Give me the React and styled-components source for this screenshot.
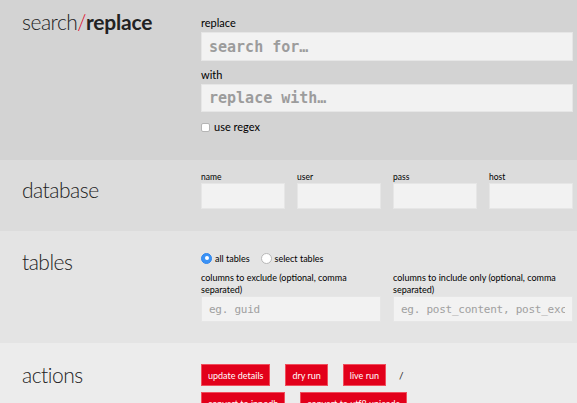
import React from 'react';
import styled, { createGlobalStyle } from 'styled-components';

const GlobalStyle = createGlobalStyle`
	html, body {
		margin: 0;
		padding: 0;
		overflow: hidden;
		background: #ececec;
	}
	body {
		font-family: Lato, "Liberation Sans", sans-serif;
		color: #111;
	}
`;

const Section = styled.section`
	display: grid;
	grid-template-columns: 201px 372px;
	height: ${(p) => p.$height}px;
	box-sizing: border-box;
	padding-right: 4px;
	background: ${(p) => p.$bg};
`;

const Heading = styled.h1`
	margin: ${(p) => p.$top}px 0 0 22px;
	font-family: Lato, "Liberation Sans", sans-serif;
	font-weight: 300;
	font-size: 21px;
	line-height: 24px;
	letter-spacing: -0.5px;
	color: #222;

	> strong {
		font-weight: 700;
		letter-spacing: -0.2px;
	}
	> em {
		font-style: normal;
		color: #e0001b;
	}
`;

const Content = styled.div`
	padding-top: ${(p) => p.$top}px;
	display: flex;
	flex-direction: column;
`;

const Field = styled.div`
	display: flex;
	flex-direction: column;
	margin-bottom: ${(p) => p.$gap || 0}px;
`;

const Label = styled.label`
	font-size: ${(p) => p.$size || 11}px;
	line-height: ${(p) => p.$line || 14}px;
	color: #000;
	margin-bottom: ${(p) => p.$mb || 0}px;
`;

const TextInput = styled.input`
	box-sizing: border-box;
	width: 100%;
	height: ${(p) => p.$h || 26}px;
	margin: 0;
	padding: 0 7px;
	border: 1px solid #e6e6e6;
	background: #f2f2f2;
	outline: none;
	font-family: "DejaVu Sans Mono", "Liberation Mono", monospace;
	font-size: ${(p) => p.$fs || 11}px;
	letter-spacing: ${(p) => (p.$fs ? 0 : -0.25)}px;
	line-height: ${(p) => (p.$h || 26) - 2}px;
	font-weight: ${(p) => (p.$bold ? 700 : 400)};
	color: #333;

	&::placeholder {
		color: ${(p) => (p.$bold ? '#9c9c9c' : '#a0a0a0')};
	}
`;

const CheckRow = styled.label`
	display: flex;
	align-items: center;
	gap: 4px;
	margin-top: 8px;
	font-size: 11px;
	line-height: 14px;
	color: #000;
`;

const Checkbox = styled.input`
	appearance: none;
	width: 9px;
	height: 9px;
	margin: 0;
	border: 1px solid #b5b5b5;
	border-radius: 2px;
	background: #fff;
`;

const Grid = styled.div`
	display: grid;
	grid-template-columns: repeat(${(p) => p.$cols}, 1fr);
	column-gap: 12px;
`;

const RadioRow = styled.div`
	display: flex;
	align-items: center;
	height: 14px;
	margin-bottom: 7px;
	font-size: 9px;
	color: #000;
`;

const RadioOption = styled.label`
	display: flex;
	align-items: center;
	gap: 3px;
	margin-right: 11px;
`;

const Radio = styled.span`
	box-sizing: border-box;
	width: 11px;
	height: 11px;
	border-radius: 50%;
	border: 1px solid ${(p) => (p.$on ? '#2f86ef' : '#b8b8b8')};
	background: ${(p) => (p.$on ? '#3b92f5' : '#fff')};
	display: flex;
	align-items: center;
	justify-content: center;

	&::after {
		content: '';
		width: 4px;
		height: 4px;
		border-radius: 50%;
		background: ${(p) => (p.$on ? '#fff' : 'transparent')};
	}
`;

const ButtonRow = styled.div`
	display: flex;
	align-items: center;
	gap: 15px;
	margin-bottom: 6px;
`;

const Button = styled.button`
	height: 22px;
	padding: 0 6px;
	border: 1px solid #f04e5c;
	background: #e2001a;
	color: #fff;
	font-family: Lato, "Liberation Sans", sans-serif;
	font-size: 9px;
	cursor: pointer;
`;

const Slash = styled.span`
	margin-left: -2px;
	font-size: 10px;
	color: #222;
`;

export default function App() {
	return (
		<>
			<GlobalStyle />
			<Section $height={160} $bg='#d3d3d3'>
				<Heading $top={10}>
					search<em>/</em>
					<strong>replace</strong>
				</Heading>
				<Content $top={16}>
					<Field $gap={7}>
						<Label $mb={2}>replace</Label>
						<TextInput $h={29} $fs={15} $bold placeholder='search for…' />
					</Field>
					<Field>
						<Label $mb={2}>with</Label>
						<TextInput $h={28} $fs={15} $bold placeholder='replace with…' />
					</Field>
					<CheckRow>
						<Checkbox type='checkbox' />
						use regex
					</CheckRow>
				</Content>
			</Section>

			<Section $height={71} $bg='#dcdcdc'>
				<Heading $top={18}>database</Heading>
				<Content $top={12}>
					<Grid $cols={4}>
						{['name', 'user', 'pass', 'host'].map((f) => (
							<Field key={f}>
								<Label $size={8.5} $line={11}>
									{f}
								</Label>
								<TextInput />
							</Field>
						))}
					</Grid>
				</Content>
			</Section>

			<Section $height={112} $bg='#e4e4e4'>
				<Heading $top={19}>tables</Heading>
				<Content $top={20}>
					<RadioRow>
						<RadioOption>
							<Radio $on />
							all tables
						</RadioOption>
						<RadioOption>
							<Radio />
							select tables
						</RadioOption>
					</RadioRow>
					<Grid $cols={2}>
						<Field>
							<Label $size={9} $line={12}>
								columns to exclude (optional, comma separated)
							</Label>
							<TextInput placeholder='eg. guid' />
						</Field>
						<Field>
							<Label $size={9} $line={12}>
								columns to include only (optional, comma separated)
							</Label>
							<TextInput placeholder='eg. post_content, post_excerpt' />
						</Field>
					</Grid>
				</Content>
			</Section>

			<Section $height={120} $bg='#ececec'>
				<Heading $top={20}>actions</Heading>
				<Content $top={21}>
					<ButtonRow>
						<Button>update details</Button>
						<Button>dry run</Button>
						<Button>live run</Button>
						<Slash>/</Slash>
					</ButtonRow>
					<ButtonRow>
						<Button>convert to innodb</Button>
						<Button>convert to utf8 unicode</Button>
					</ButtonRow>
				</Content>
			</Section>
		</>
	);
}
